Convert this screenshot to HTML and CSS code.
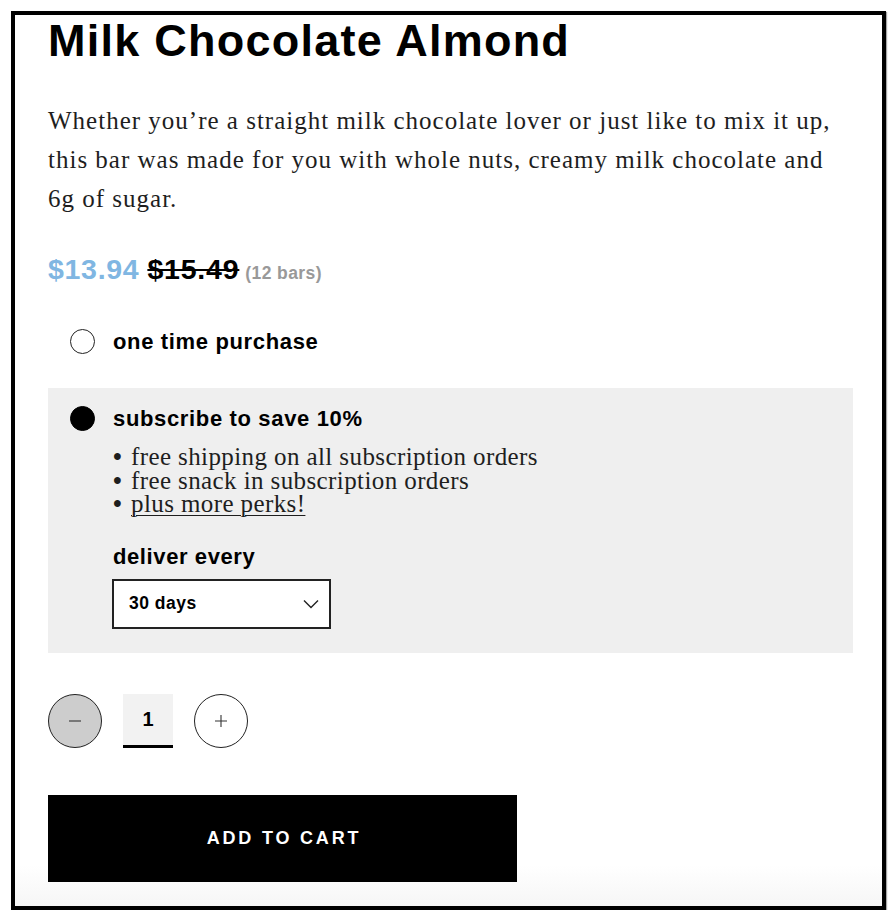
FILE: index.html
```html
<!DOCTYPE html>
<html lang="en">
<head>
<meta charset="utf-8">
<title>Milk Chocolate Almond</title>
<link rel="stylesheet" href="styles.css">
</head>
<body>
<div class="frame">
  <h1 class="title">Milk Chocolate Almond</h1>
  <p class="desc">Whether you’re a straight milk chocolate lover or just like to mix it up,<br>this bar was made for you with whole nuts, creamy milk chocolate and<br>6g of sugar.</p>
  <div class="price">
    <span class="price-now">$13.94</span>
    <span class="price-was">$15.49</span>
    <span class="price-note">(12 bars)</span>
  </div>
  <div class="option">
    <div class="option-row">
      <span class="radio"></span>
      <span class="option-label">one time purchase</span>
    </div>
  </div>
  <div class="option option-active">
    <div class="option-row">
      <span class="radio radio-on"></span>
      <span class="option-label">subscribe to save 10%</span>
    </div>
    <div class="option-body">
      <ul class="perks">
        <li>free shipping on all subscription orders</li>
        <li>free snack in subscription orders</li>
        <li><a href="#" class="perks-link">plus more perks!</a></li>
      </ul>
      <div class="deliver-label">deliver every</div>
      <div class="select">
        <span class="select-value">30 days</span>
        <svg class="chevron" width="16" height="10" viewBox="0 0 16 10"><path d="M1 1.5 L8 8.5 L15 1.5" fill="none" stroke="#222" stroke-width="1.4"/></svg>
      </div>
    </div>
  </div>
  <div class="qty">
    <button class="qty-btn qty-minus" type="button"><svg width="14" height="14" viewBox="0 0 14 14"><path d="M1 7 H13" stroke="#333" stroke-width="1.1"/></svg></button>
    <div class="qty-value">1</div>
    <button class="qty-btn qty-plus" type="button"><svg width="14" height="14" viewBox="0 0 14 14"><path d="M1 7 H13 M7 1 V13" stroke="#333" stroke-width="1.1"/></svg></button>
  </div>
  <button class="cart" type="button">ADD TO CART</button>
</div>
</body>
</html>
```

FILE: styles.css
```css
* { box-sizing: border-box; }
html, body { margin: 0; padding: 0; background: #fff; }
body { font-family: "Liberation Sans", Arial, sans-serif; color: #000; }

.frame {
  margin: 11px 0 0 11px;
  width: 875px;
  height: 899px;
  border: 4px solid #000;
  box-shadow: 1px 1px 1px rgba(0,0,0,0.35);
  padding: 3px 0 0 33px;
  background: linear-gradient(to bottom, #fff 0, #fff 850px, #f6f6f6 100%);
  overflow: hidden;
}

.title {
  margin: 0;
  font-size: 45px;
  line-height: 46px;
  font-weight: 700;
  letter-spacing: 1.25px;
  white-space: nowrap;
}

.desc {
  margin: 37px 0 0;
  font-family: "Liberation Serif", "Times New Roman", serif;
  font-size: 25px;
  line-height: 39px;
  letter-spacing: 1px;
  color: #1e1e1e;
  white-space: nowrap;
}

.price {
  margin-top: 34px;
  display: flex;
  align-items: baseline;
  line-height: 34px;
  font-weight: 700;
}
.price-now { font-size: 28.5px; color: #80b6e2; letter-spacing: 0.7px; }
.price-was {
  font-size: 28.5px; margin-left: 8px; letter-spacing: 0.8px;
  text-decoration: line-through; text-decoration-thickness: 2px;
}
.price-note { font-size: 17.5px; color: #999; margin-left: 6px; letter-spacing: 0.4px; }

.option { padding-left: 22px; margin-top: 39px; width: 805px; }
.option-active {
  margin-top: 34px;
  background: #efefef;
  padding: 18px 0 24px 22px;
}
.option-row { display: flex; align-items: center; gap: 18px; }
.radio {
  width: 25px; height: 25px; border-radius: 50%;
  border: 1.5px solid #222; background: #fff; flex: none;
}
.radio-on { background: #000; border-color: #000; }
.option-label {
  font-size: 22px; line-height: 25px; font-weight: 700; letter-spacing: 0.65px;
}

.option-body { padding-left: 43px; }
.perks {
  list-style: none; margin: 14px 0 0; padding: 0;
  font-family: "Liberation Serif", "Times New Roman", serif;
  font-size: 25px; line-height: 23.5px; letter-spacing: 0.4px; color: #1e1e1e;
}
.perks li { display: flex; }
.perks li::before { content: "•"; width: 18px; flex: none; font-weight: 700; }
.perks-link { color: #1e1e1e; text-decoration: underline; text-underline-offset: 3px; text-decoration-thickness: 1px; }

.deliver-label {
  margin-top: 28px; font-size: 22px; line-height: 25px; font-weight: 700; letter-spacing: 0.6px;
}
.select {
  margin-top: 10px;
  margin-left: -1px;
  width: 219px; height: 50px;
  border: 2px solid #222; background: #fff;
  display: flex; align-items: center; justify-content: space-between;
  padding: 0 10px 0 15px;
}
.select-value { font-size: 17.5px; font-weight: 700; letter-spacing: 0.5px; }
.chevron { display: block; }

.qty { margin-top: 41px; display: flex; gap: 21px; align-items: stretch; }
.qty-btn {
  width: 54px; height: 54px; border-radius: 50%;
  border: 1.5px solid #222; background: #fff; padding: 0;
  display: flex; align-items: center; justify-content: center;
}
.qty-minus { background: #cdcdcd; }
.qty-value {
  width: 50px; height: 54px; background: #f2f2f2; border-bottom: 3px solid #000;
  display: flex; align-items: center; justify-content: center;
  font-size: 20px; font-weight: 700; padding-top: 1px;
}

.cart {
  display: block;
  margin-top: 47px;
  width: 469px; height: 87px;
  background: #000; color: #fff; border: 0;
  font-family: "Liberation Sans", Arial, sans-serif;
  font-size: 18px; font-weight: 700; letter-spacing: 2.8px;
  padding: 0 0 0 3px;
}
```
